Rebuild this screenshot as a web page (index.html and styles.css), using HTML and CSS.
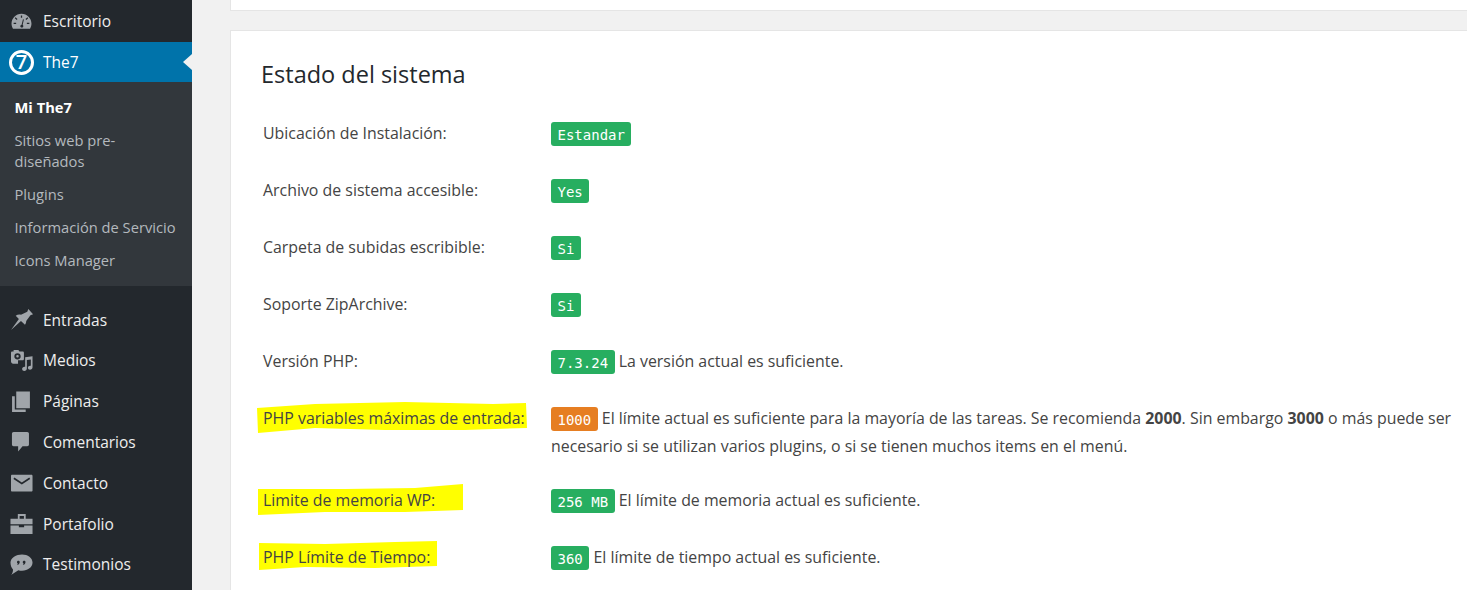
FILE: index.html

```html
<!DOCTYPE html>
<html lang="es">
<head>
  <meta charset="UTF-8" />
  <meta name="viewport" content="width=device-width, initial-scale=1.0"/>
  <title>Estado del sistema</title>
  <link rel="stylesheet" href="styles.css">
</head>
<body>
  <div class="page">
    <nav class="sidebar">
      <a class="menu-item first" href="#">
        <svg class="menu-icon" viewBox="0 0 20 20"><path fill-rule="evenodd" d="M10 2.500C4.700 2.500 0.500 6.800 0.500 12c0 1.900 0.500 3.500 1.400 5h16.200c0.900-1.500 1.400-3.100 1.400-5 0-5.200-4.200-9.500-9.500-9.500zM9.400 4.200h1.200v2.300H9.400zM4.300 6l1.900 1.600-0.800 0.900-1.800-1.700zM15.700 6l0.700 0.800-1.800 1.700-0.800-0.900zM2.500 11.200h2.400v1.200H2.500zM15.100 11.200h2.400v1.200h-2.400zM11.400 7.800l0.900 0.300-1.200 5.100c0.500 0.400 0.700 1 0.600 1.500-0.100 0.800-0.900 1.300-1.700 1.100-0.800-0.100-1.300-0.900-1.100-1.700 0.100-0.600 0.600-1 1.200-1.100z"/></svg>
        <span>Escritorio</span>
      </a>
      <a class="menu-item current" href="#">
        <span class="the7-logo">7</span>
        <span>The7</span>
      </a>
      <ul class="submenu">
        <li class="active">Mi The7</li>
        <li>Sitios web pre-<br>diseñados</li>
        <li>Plugins</li>
        <li>Información de Servicio</li>
        <li>Icons Manager</li>
      </ul>
      <div class="menu-main">
        <a class="menu-item" href="#">
          <svg class="menu-icon" viewBox="0 0 20 20"><path d="M16.500 0L21 5l-2.500 1-4 5.500c0 1.500-0.500 2.500-1.200 3.500L9.500 11.500 0 20 7.500 9.500 4.500 6.500C6 5.500 7.500 5 9.500 5.500l6-3z"/></svg>
          <span>Entradas</span>
        </a>
        <a class="menu-item" href="#">
          <svg class="menu-icon" viewBox="0 0 20 20"><path fill-rule="evenodd" d="M2.500 0h4.500l1 1.500h3c0.800 0 1.300 0.500 1.300 1.300v5.700c0 0.800-0.500 1.300-1.300 1.300H6.700v3.200H2C1 13 0 12.200 0 11V2.800C0 2 0.500 1.500 1.300 1.500h1.200zM6.200 3a3 3 0 1 0 0 6a3 3 0 0 0 0-6zM6.200 4.800a1.200 1.200 0 1 1 0 2.400a1.200 1.200 0 0 1 0-2.400zM13.500 7l7-1v10.500c0 1.400-1.100 2.400-2.400 2.400-1.100 0-2-0.800-2-1.900s1-2 2.200-2c0.200 0 0.400 0 0.600 0.100V9l-3.800 0.500v8c0 1.300-1.100 2.400-2.400 2.400-1.200 0-2.100-0.800-2.100-1.900s1-2.100 2.300-2.100c0.200 0 0.400 0 0.600 0.100z"/></svg>
          <span>Medios</span>
        </a>
        <a class="menu-item" href="#">
          <svg class="menu-icon" viewBox="0 0 20 20"><path d="M5 0.500h13v16H5zM1 5h2.600v12.500H14V20H1z"/></svg>
          <span>Páginas</span>
        </a>
        <a class="menu-item" href="#">
          <svg class="menu-icon" viewBox="0 0 20 20"><path d="M2.500 1h13c0.900 0 1.600 0.700 1.600 1.600v10.300c0 0.900-0.700 1.600-1.600 1.600H11l-4.200 5v-5H2.500c-0.900 0-1.600-0.700-1.600-1.600V2.600C0.900 1.700 1.600 1 2.500 1z"/></svg>
          <span>Comentarios</span>
        </a>
        <a class="menu-item" href="#">
          <svg class="menu-icon" viewBox="0 0 20 20"><path fill-rule="evenodd" d="M1 2.500h18.500c0.500 0 1 0.500 1 1v14c0 0.500-0.500 1-1 1H1c-0.500 0-1-0.500-1-1v-14c0-0.500 0.500-1 1-1zM3.200 5.200L2.300 6.600l8 5.400 8-5.400-0.900-1.400-7.100 4.700z"/></svg>
          <span>Contacto</span>
        </a>
        <a class="menu-item" href="#">
          <svg class="menu-icon" viewBox="0 0 20 20"><path fill-rule="evenodd" d="M6.500 1h7.500v4.500H20.500v5.300H-0.500V5.500h7zM8.200 2.800v2.700h4.100V2.800zM-0.500 12h8v1.500h5V12h8v8h-21z"/></svg>
          <span>Portafolio</span>
        </a>
        <a class="menu-item" href="#">
          <svg class="menu-icon" viewBox="0 0 20 20"><path fill-rule="evenodd" d="M10.500 0.500c5.500 0 10 3.200 10 7.700s-4.500 7.700-10 7.700c-1.200 0-2.400-0.200-3.500-0.500L0 20c1.300-1.300 2-3.300 1.900-5.300C0.400 13.300-0.500 11-0.500 8.200-0.500 3.700 5 0.500 10.500 0.500zM7 6.500c-0.800 0-1.300 0.600-1.300 1.300 0 0.600 0.300 1 0.800 1.200-0.100 0.600-0.400 1-0.800 1.300 1.300 0 2.500-1 2.600-2.500 0-0.800-0.500-1.300-1.300-1.300zM12.500 6.500c-0.800 0-1.300 0.600-1.300 1.300 0 0.600 0.300 1 0.800 1.200-0.100 0.600-0.400 1-0.800 1.300 1.300 0 2.500-1 2.600-2.500 0-0.800-0.500-1.300-1.300-1.300z"/></svg>
          <span>Testimonios</span>
        </a>
      </div>
    </nav>

    <main class="content">
      <div class="card card-top"></div>
      <section class="card status">
        <h2>Estado del sistema</h2>
        <div class="row">
          <div class="label">Ubicación de Instalación:</div>
          <div class="value"><code class="badge">Estandar</code></div>
        </div>
        <div class="row">
          <div class="label">Archivo de sistema accesible:</div>
          <div class="value"><code class="badge">Yes</code></div>
        </div>
        <div class="row">
          <div class="label">Carpeta de subidas escribible:</div>
          <div class="value"><code class="badge">Si</code></div>
        </div>
        <div class="row">
          <div class="label">Soporte ZipArchive:</div>
          <div class="value"><code class="badge">Si</code></div>
        </div>
        <div class="row">
          <div class="label">Versión PHP:</div>
          <div class="value"><code class="badge">7.3.24</code> La versión actual es suficiente.</div>
        </div>
        <div class="row row-double">
          <div class="label">
            <svg class="marker" width="273" height="33" viewBox="0 0 273 33"><polygon points="2,7 60,3 150,1 238,3 271,2 272,27 210,29 130,29 60,27 3,32"/></svg>
            <span>PHP variables máximas de entrada:</span>
          </div>
          <div class="value"><code class="badge warn">1000</code> El límite actual es suficiente para la mayoría de las tareas. Se recomienda <strong>2000</strong>. Sin embargo <strong>3000</strong> o más puede ser<br>necesario si se utilizan varios plugins, o si se tienen muchos items en el menú.</div>
        </div>
        <div class="row">
          <div class="label">
            <svg class="marker" width="210" height="33" viewBox="0 0 210 33"><polygon points="3,6 90,6 160,5 208,1 208,27 150,29 70,29 3,32"/></svg>
            <span>Limite de memoria WP:</span>
          </div>
          <div class="value"><code class="badge">256 MB</code> El límite de memoria actual es suficiente.</div>
        </div>
        <div class="row">
          <div class="label">
            <svg class="marker" width="184" height="32" viewBox="0 0 184 32"><polygon points="4,3 70,4 140,2 182,1 182,26 120,28 50,27 4,30"/></svg>
            <span>PHP Límite de Tiempo:</span>
          </div>
          <div class="value"><code class="badge">360</code> El límite de tiempo actual es suficiente.</div>
        </div>
      </section>
    </main>
  </div>
</body>
</html>
```

FILE: styles.css

```css
* {
  box-sizing: border-box;
  margin: 0;
  padding: 0;
}

html, body {
  height: 590px;
  overflow: hidden;
}

body {
  font-family: "Open Sans", "Noto Sans", sans-serif;
  font-size: 15.9px;
  background: #f1f1f1;
  color: #444;
}

.page {
  display: flex;
  height: 590px;
}

/* Sidebar */
.sidebar {
  flex: 0 0 192px;
  background: #23282d;
}

.menu-item {
  display: flex;
  align-items: center;
  height: 40.8px;
  padding-left: 11px;
  color: #eee;
  font-size: 15.5px;
  text-decoration: none;
}

.menu-item.first {
  height: 42px;
}

.menu-icon {
  flex: 0 0 21px;
  width: 21px;
  height: 21px;
  margin-right: 11px;
  fill: #a0a5aa;
  overflow: visible;
}

.menu-item.current {
  position: relative;
  height: 40px;
  background: #0073aa;
  color: #fff;
}

.menu-item.current::after {
  content: "";
  position: absolute;
  right: 0;
  top: 12px;
  border: 8px solid transparent;
  border-right: 9px solid #f1f1f1;
  border-left-width: 0;
}

.the7-logo {
  flex: 0 0 25px;
  width: 25px;
  height: 25px;
  margin: 0 9px 0 -2px;
  border: 3px solid #fff;
  border-radius: 50%;
  font-size: 20px;
  font-weight: 600;
  line-height: 18px;
  text-align: center;
}

.submenu {
  height: 204px;
  padding: 15px 0 0 14.5px;
  background: #32373c;
  list-style: none;
  color: #b4b9be;
  font-size: 14.7px;
  line-height: 20.3px;
}

.submenu li {
  padding-bottom: 13px;
}

.submenu .active {
  color: #fff;
  font-weight: 700;
}

.menu-main {
  padding-top: 13.2px;
}

/* Content */
.content {
  flex: 1;
  min-width: 0;
  padding-left: 38px;
  overflow: hidden;
}

.card {
  width: 1300px;
  background: #fff;
  border: 1px solid #e5e5e5;
}

.card-top {
  height: 12px;
  margin-top: -1px;
  margin-bottom: 19px;
}

.status {
  height: 600px;
  padding: 26px 0 0 31px;
}

.status h2 {
  margin-left: -1px;
  margin-bottom: 17px;
  color: #23282d;
  font-size: 23.5px;
  font-weight: 400;
  line-height: 34px;
}

.row {
  display: grid;
  grid-template-columns: 289px 915px;
  min-height: 57px;
  padding-top: 11px;
  line-height: 28px;
}

.row-double {
  min-height: 82px;
}

.label {
  position: relative;
  padding-left: 1px;
}

.label span {
  position: relative;
}

.marker {
  position: absolute;
  left: -7px;
  top: -3px;
  fill: #ffff00;
}

.badge {
  display: inline-block;
  height: 24px;
  margin-top: 3px;
  padding: 0 6.5px;
  border-radius: 3px;
  background: #27ae60;
  color: #fff;
  font-family: "DejaVu Sans Mono", "Liberation Mono", monospace;
  font-size: 14px;
  line-height: 26px;
  vertical-align: top;
}

.badge.warn {
  background: #e67e22;
}
```
